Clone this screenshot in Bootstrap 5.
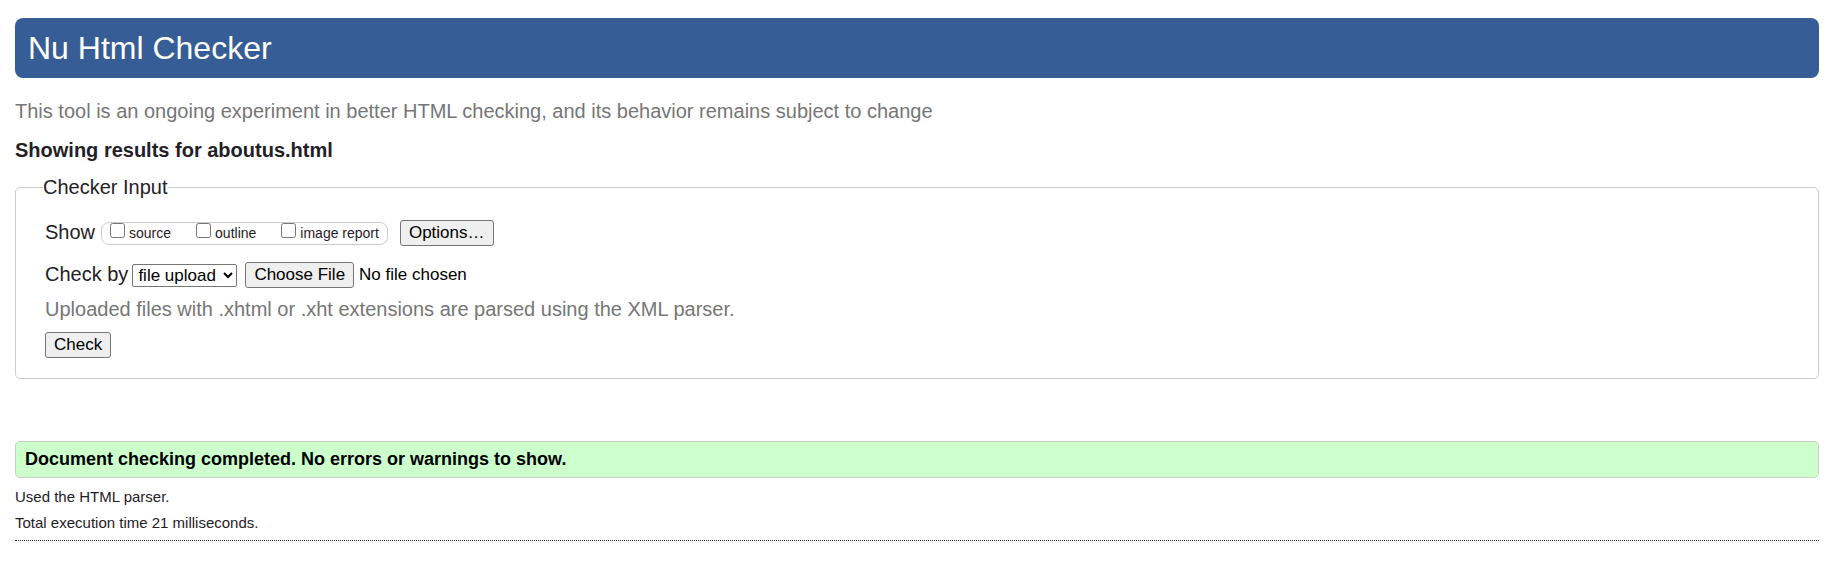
<!DOCTYPE html>
<html lang="en">
<head>
<meta charset="utf-8">
<meta name="viewport" content="width=device-width, initial-scale=1">
<title>Showing results for aboutus.html - Nu Html Checker</title>
<link href="https://cdn.jsdelivr.net/npm/bootstrap@5.3.0/dist/css/bootstrap.min.css" rel="stylesheet">
<style>
  body { font-family: "Liberation Sans", Arial, sans-serif; font-size: 20px; line-height: 26px; color: #1f2126; padding: 18px 16px 18px 15px; }
  .banner { background: #365d95; border-radius: 8px; padding: 0 13px; }
  .banner h1 { font-size: 32px; line-height: 60px; }
  .muted-note { color: #767676; }
  h2 { font-size: 20px; line-height: 28px; margin: 12px 0 10px; }
  .checker { border: 1px solid #ccc; border-radius: 5px; padding: 20px 29px 20px; margin-bottom: 62px; }
  .checker legend { float: none; width: auto; font-size: 20px; line-height: 26px; margin: 0 0 0 -2px; padding: 0; }
  .checker button, .checker select, .checker input[type=file] { font-size: 17px; line-height: 20px; color: #000; }
  .checker button, .checker ::file-selector-button { border: 1px solid #767676; border-radius: 3px; background: #efefef; color: #000; padding: 2px 8px; font-size: 17px; line-height: 20px; }
  .checker ::file-selector-button { margin-right: 5px; }
  .checker select { border: 1px solid #767676; border-radius: 2px; background: #fff; height: 23px; padding: 0 4px 0 1px; }
  .row-label { line-height: 24px; padding-bottom: 2px; }
  .show-box { border: 1px solid #ccc; border-radius: 8px; font-size: 14px; line-height: 21px; padding: 0 8px; gap: 25px; margin: 0 12px 0 6px; }
  .show-box input { width: 15px; height: 15px; margin: 0 4px 0 0; }
  .result { background: #cfc; border: 1px solid #ccc; border-radius: 5px; color: #000; font-size: 18px; line-height: 35px; padding: 0 9px; margin-bottom: 6px; }
  .details { font-size: 15px; line-height: 26px; }
  .end-rule { border-top: 1px dotted #333; opacity: 1; }
</style>
</head>
<body>
<header class="banner text-white mb-3"><h1 class="fw-normal m-0">Nu Html Checker</h1></header>
<main>
  <p class="muted-note mb-0 pt-1">This tool is an ongoing experiment in better HTML checking, and its behavior remains subject to change</p>
  <h2 class="fw-bold">Showing results for aboutus.html</h2>
  <form>
    <fieldset class="checker">
      <legend>Checker Input</legend>
      <div class="d-flex align-items-center mb-3">
        <span class="row-label">Show</span>
        <div class="show-box d-flex">
          <label class="d-flex" for="source"><input type="checkbox" id="source">source</label>
          <label class="d-flex" for="outline"><input type="checkbox" id="outline">outline</label>
          <label class="d-flex" for="images"><input type="checkbox" id="images">image report</label>
        </div>
        <button type="button">Options…</button>
      </div>
      <div class="d-flex align-items-center mb-2">
        <label class="row-label me-1" for="method">Check by</label>
        <select id="method" class="me-2"><option>file upload</option><option>address</option><option>text input</option></select>
        <input type="file" aria-label="File to check">
      </div>
      <p class="muted-note mb-2">Uploaded files with .xhtml or .xht extensions are parsed using the XML parser.</p>
      <button type="submit">Check</button>
    </fieldset>
  </form>
  <p class="result fw-bold">Document checking completed. No errors or warnings to show.</p>
  <p class="details m-0">Used the HTML parser.</p>
  <p class="details m-0">Total execution time 21 milliseconds.</p>
  <hr class="end-rule mt-1 mb-0">
</main>
<script src="https://cdn.jsdelivr.net/npm/bootstrap@5.3.0/dist/js/bootstrap.bundle.min.js"></script>
</body>
</html>
